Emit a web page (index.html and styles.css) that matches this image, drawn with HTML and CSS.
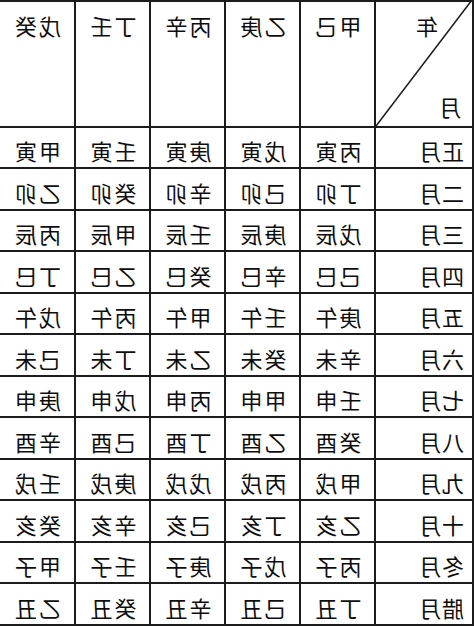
FILE: index.html
```html
<!DOCTYPE html>
<html lang="zh">
<head>
<meta charset="utf-8">
<title>五虎遁月表</title>
<link rel="stylesheet" href="styles.css">
</head>
<body>
<div class="sheet">
  <div class="corner">
    <svg class="diag" viewBox="0 0 100 100" preserveAspectRatio="none"><line x1="0" y1="0" x2="100" y2="100" stroke="#1c1c1c" stroke-width="1.6" vector-effect="non-scaling-stroke"/></svg>
    <span class="c-year">年</span>
    <span class="c-month">月</span>
  </div>
  <div class="head">甲己</div>
  <div class="head">乙庚</div>
  <div class="head">丙辛</div>
  <div class="head">丁壬</div>
  <div class="head">戊癸</div>

  <div class="mon">正月</div><div class="cell">丙寅</div><div class="cell">戊寅</div><div class="cell">庚寅</div><div class="cell">壬寅</div><div class="cell">甲寅</div>
  <div class="mon">二月</div><div class="cell">丁卯</div><div class="cell">己卯</div><div class="cell">辛卯</div><div class="cell">癸卯</div><div class="cell">乙卯</div>
  <div class="mon">三月</div><div class="cell">戊辰</div><div class="cell">庚辰</div><div class="cell">壬辰</div><div class="cell">甲辰</div><div class="cell">丙辰</div>
  <div class="mon">四月</div><div class="cell">己巳</div><div class="cell">辛巳</div><div class="cell">癸巳</div><div class="cell">乙巳</div><div class="cell">丁巳</div>
  <div class="mon">五月</div><div class="cell">庚午</div><div class="cell">壬午</div><div class="cell">甲午</div><div class="cell">丙午</div><div class="cell">戊午</div>
  <div class="mon">六月</div><div class="cell">辛未</div><div class="cell">癸未</div><div class="cell">乙未</div><div class="cell">丁未</div><div class="cell">己未</div>
  <div class="mon">七月</div><div class="cell">壬申</div><div class="cell">甲申</div><div class="cell">丙申</div><div class="cell">戊申</div><div class="cell">庚申</div>
  <div class="mon">八月</div><div class="cell">癸酉</div><div class="cell">乙酉</div><div class="cell">丁酉</div><div class="cell">己酉</div><div class="cell">辛酉</div>
  <div class="mon">九月</div><div class="cell">甲戌</div><div class="cell">丙戌</div><div class="cell">戊戌</div><div class="cell">庚戌</div><div class="cell">壬戌</div>
  <div class="mon">十月</div><div class="cell">乙亥</div><div class="cell">丁亥</div><div class="cell">己亥</div><div class="cell">辛亥</div><div class="cell">癸亥</div>
  <div class="mon">冬月</div><div class="cell">丙子</div><div class="cell">戊子</div><div class="cell">庚子</div><div class="cell">壬子</div><div class="cell">甲子</div>
  <div class="mon">腊月</div><div class="cell">丁丑</div><div class="cell">己丑</div><div class="cell">辛丑</div><div class="cell">癸丑</div><div class="cell">乙丑</div>
</div>
</body>
</html>
```

FILE: styles.css
```css
html, body {
  margin: 0;
  padding: 0;
  background: #ffffff;
  overflow: hidden;
}

.sheet {
  width: 474px;
  height: 626px;
  box-sizing: border-box;
  display: grid;
  grid-template-columns: 96px 73px 73px 73px 73px 74px;
  grid-template-rows: 124px repeat(6, 39px 40px);
  gap: 2px;
  padding: 2px 0 2px 2px;
  background: #1c1c1c;
  transform: scaleX(-1);
  font-family: "Noto Sans CJK SC", "Noto Sans CJK TC", sans-serif;
  font-size: 22px;
  color: #0e0e0e;
  line-height: 1;
}

.sheet > div {
  background: #ffffff;
}

.head {
  display: flex;
  justify-content: center;
  align-items: flex-start;
  padding-top: 12px;
  letter-spacing: 2px;
}

.cell {
  display: flex;
  justify-content: center;
  align-items: center;
  padding-top: 5px;
  letter-spacing: 2px;
}

.mon {
  display: flex;
  align-items: center;
  padding-left: 8px;
  padding-top: 5px;
  letter-spacing: 1px;
}

.corner {
  position: relative;
  display: flex;
  flex-direction: column;
  justify-content: space-between;
  align-items: flex-start;
  padding: 12px 0 9px 0;
  box-sizing: border-box;
}

.diag {
  position: absolute;
  left: 0;
  top: -2px;
  width: 100%;
  height: calc(100% + 2px);
}

.c-year {
  margin-left: 34px;
}

.c-month {
  margin-left: 11px;
}
```
